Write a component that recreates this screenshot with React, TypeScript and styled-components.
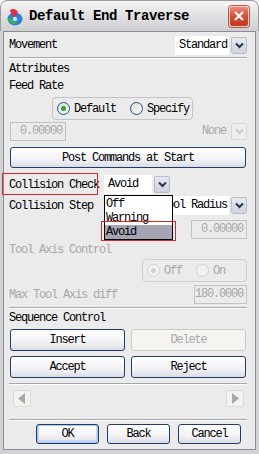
import React from "react";
import styled, { createGlobalStyle, css } from "styled-components";

const MONO = `"Liberation Mono", "Cousine", "Courier New", "Nimbus Mono PS", "FreeMono", monospace`;

const GlobalStyle = createGlobalStyle`
  html, body { margin: 0; padding: 0; background: #ffffff; }
  body { font-family: ${MONO}; }
  * { box-sizing: border-box; }
`;

const Window = styled.div`
  position: relative;
  width: 259px;
  height: 454px;
  background: #d2d2d6;
  border-radius: 7px 7px 0 0;
  display: flex;
  flex-direction: column;
  overflow: hidden;
  font-family: ${MONO};
`;

const TitleBar = styled.div`
  height: 31px;
  display: flex;
  align-items: center;
  padding: 0 9px 0 5px;
  background: linear-gradient(#f6f6f6, #e2e2e4 45%, #cfcfd3);
  border-radius: 7px 7px 0 0;
  border: 1px solid #9a9aa0;
  border-bottom: none;
`;

const TitleText = styled.span`
  flex: 1;
  margin-left: 5px;
  font-family: ${MONO};
  font-size: 14px;
  font-weight: bold;
  letter-spacing: -0.4px;
  color: #000;
`;

const CloseButton = styled.div`
  width: 20px;
  height: 21px;
  border-radius: 3px;
  border: 1px solid #f4d0c8;
  background: linear-gradient(#e88a78, #d44a32 55%, #c23a22);
  display: flex;
  align-items: center;
  justify-content: center;
  box-shadow: 0 0 0 1px #b85a4a;
`;

const Body = styled.div`
  flex: 1;
  margin: 0 3px 4px;
  border: 1px solid #8c8c90;
  background: #ebebeb;
  padding: 0 8px 0 5px;
  display: flex;
  flex-direction: column;
`;

const Row = styled.div<{ $h: number; $mt: number; $pl?: number }>`
  height: ${(p) => p.$h}px;
  margin-top: ${(p) => p.$mt}px;
  padding-left: ${(p) => p.$pl ?? 0}px;
  display: flex;
  align-items: center;
  justify-content: space-between;
  flex-shrink: 0;
`;

const textBase = css`
  font-family: ${MONO};
  font-size: 12px;
  letter-spacing: -1.2px;
  white-space: nowrap;
`;

const Label = styled.span<{ $disabled?: boolean }>`
  ${textBase};
  color: ${(p) => (p.$disabled ? "#a8a8a8" : "#000")};
`;

const Separator = styled.div<{ $mt: number }>`
  margin-top: ${(p) => p.$mt}px;
  height: 2px;
  border-top: 1px solid #a8a8ac;
  border-bottom: 1px solid #ffffff;
  flex-shrink: 0;
`;

const Combo = styled.div<{ $w: number }>`
  width: ${(p) => p.$w}px;
  height: 19px;
  display: flex;
  align-items: center;
  gap: 2px;
`;

const ComboField = styled.div<{ $disabled?: boolean }>`
  ${textBase};
  flex: 1;
  height: 19px;
  line-height: 19px;
  padding-left: 4px;
  background: ${(p) => (p.$disabled ? "#ebebeb" : "#ffffff")};
  color: ${(p) => (p.$disabled ? "#a8a8a8" : "#000")};
  overflow: hidden;
`;

const ArrowBtn = styled.div<{ $disabled?: boolean }>`
  width: 16px;
  height: 17px;
  border: 1px solid ${(p) => (p.$disabled ? "#d8d8dc" : "#b8bcc8")};
  border-radius: 2px;
  background: ${(p) =>
    p.$disabled ? "#eeeef0" : "linear-gradient(#e8e9ef, #cfd2dc)"};
  display: flex;
  align-items: center;
  justify-content: center;
`;

const Field = styled.div<{ $w: number }>`
  ${textBase};
  width: ${(p) => p.$w}px;
  height: 19px;
  line-height: 17px;
  border: 1px solid #c2c2c4;
  color: #a8a8a8;
  text-align: right;
  padding-right: 3px;
`;

const RadioGroup = styled.div<{ $w: number; $ml: number; $disabled?: boolean }>`
  width: ${(p) => p.$w}px;
  margin-left: ${(p) => p.$ml}px;
  height: 23px;
  border: 1px solid ${(p) => (p.$disabled ? "#cfcfd2" : "#c4c4c8")};
  border-radius: 4px;
  display: flex;
  align-items: center;
  padding-left: 4px;
`;

const RadioItem = styled.div<{ $w: number }>`
  width: ${(p) => p.$w}px;
  display: flex;
  align-items: center;
  gap: 4px;
`;

const RadioCircle = styled.span<{ $checked?: boolean; $disabled?: boolean }>`
  width: 13px;
  height: 13px;
  border-radius: 50%;
  border: 1px solid ${(p) => (p.$disabled ? "#d2d2d6" : "#1c5180")};
  background: ${(p) =>
    p.$disabled ? "#f2f2f2" : "linear-gradient(135deg, #dcdcd6, #ffffff)"};
  display: flex;
  align-items: center;
  justify-content: center;
  &::after {
    content: "";
    display: ${(p) => (p.$checked ? "block" : "none")};
    width: 5px;
    height: 5px;
    border-radius: 50%;
    background: ${(p) => (p.$disabled ? "#d0d0d0" : "#2fa42f")};
  }
`;

const Button = styled.div<{ $disabled?: boolean; $default?: boolean; $w?: number }>`
  ${textBase};
  ${(p) => (p.$w ? `width: ${p.$w}px;` : "flex: 1;")}
  height: 100%;
  border: 1px solid ${(p) => (p.$disabled ? "#cacac4" : "#1f3d6a")};
  border-radius: 3px;
  background: ${(p) =>
    p.$disabled
      ? "#f4f4f0"
      : "linear-gradient(#ffffff, #f2f2f6 60%, #dcdce4)"};
  color: ${(p) => (p.$disabled ? "#a8a8a4" : "#000")};
  display: flex;
  align-items: center;
  justify-content: center;
  ${(p) => p.$default && "box-shadow: inset 0 0 0 1px #a9c4ee, inset 0 -1px 0 2px #c6d6f2;"}
`;

const ButtonPair = styled.div<{ $h: number; $mt: number }>`
  height: ${(p) => p.$h}px;
  margin-top: ${(p) => p.$mt}px;
  display: flex;
  gap: 6px;
  padding: 0 1px 0 1px;
  flex-shrink: 0;
`;

const ScrollBtn = styled.div`
  width: 18px;
  height: 17px;
  border: 1px solid #dadad6;
  border-radius: 2px;
  background: #f2f2f0;
  display: flex;
  align-items: center;
  justify-content: center;
`;

const Footer = styled.div`
  height: 20px;
  margin-top: 3px;
  display: flex;
  justify-content: flex-end;
  gap: 8px;
  padding-right: 6px;
  flex-shrink: 0;
`;

const Dropdown = styled.div`
  position: absolute;
  left: 104px;
  top: 195px;
  width: 69px;
  height: 45px;
  background: #ffffff;
  border: 1px solid #000;
  display: flex;
  flex-direction: column;
  padding-top: 1px;
`;

const DropItem = styled.div<{ $selected?: boolean }>`
  ${textBase};
  height: 14px;
  line-height: 14px;
  padding-left: 1px;
  background: ${(p) => (p.$selected ? "#a4a4b4" : "transparent")};
  color: #000;
`;

const Marker = styled.div<{ $x: number; $y: number; $w: number; $h: number }>`
  position: absolute;
  left: ${(p) => p.$x}px;
  top: ${(p) => p.$y}px;
  width: ${(p) => p.$w}px;
  height: ${(p) => p.$h}px;
  border: 1px solid #d42a2a;
  pointer-events: none;
`;

const Chevron = ({ color = "#2a3450" }: { color?: string }) => (
  <svg width="9" height="7" viewBox="0 0 9 7">
    <path d="M1 1.5 L4.5 5 L8 1.5" stroke={color} strokeWidth="2" fill="none" />
  </svg>
);

const AppIcon = () => (
  <svg width="18" height="19" viewBox="0 0 18 19">
    <ellipse cx="9" cy="12" rx="7.5" ry="6.5" fill="#2f7fd6" />
    <path d="M2 12 Q4 18 12 17 Q6 15 5 10 Z" fill="#3cb83c" />
    <path d="M10 13 Q16 13 16 8 Q15 14 10 13 Z" fill="#f0c020" />
    <path d="M4 3 Q9 0 12 5 L9 10 Q5 9 4 3 Z" fill="#e02c4a" />
    <circle cx="9" cy="12" r="2.2" fill="#bfe4ff" />
  </svg>
);

const Triangle = ({ dir }: { dir: "left" | "right" }) => (
  <svg width="8" height="11" viewBox="0 0 8 11">
    <path d={dir === "left" ? "M7 0 L0 5.5 L7 11 Z" : "M1 0 L8 5.5 L1 11 Z"} fill="#a8a8a8" />
  </svg>
);

export default function App() {
  return (
    <>
      <GlobalStyle />
      <Window>
        <TitleBar>
          <AppIcon />
          <TitleText>Default End Traverse</TitleText>
          <CloseButton>
            <svg width="12" height="12" viewBox="0 0 12 12">
              <path d="M2 2 L10 10 M10 2 L2 10" stroke="#ffffff" strokeWidth="2.2" />
            </svg>
          </CloseButton>
        </TitleBar>
        <Body>
          <Row $h={20} $mt={3}>
            <Label>Movement</Label>
            <Combo $w={72}>
              <ComboField>Standard</ComboField>
              <ArrowBtn><Chevron /></ArrowBtn>
            </Combo>
          </Row>
          <Separator $mt={2} />
          <Row $h={16} $mt={2}>
            <Label>Attributes</Label>
          </Row>
          <Row $h={16} $mt={1}>
            <Label>Feed Rate</Label>
          </Row>
          <Row $h={23} $mt={3} style={{ justifyContent: "flex-start" }}>
            <RadioGroup $w={141} $ml={43}>
              <RadioItem $w={73}>
                <RadioCircle $checked />
                <Label>Default</Label>
              </RadioItem>
              <RadioItem $w={62}>
                <RadioCircle />
                <Label>Specify</Label>
              </RadioItem>
            </RadioGroup>
          </Row>
          <Row $h={19} $mt={2} $pl={1}>
            <Field $w={56}>0.00000</Field>
            <Combo $w={49}>
              <ComboField $disabled>None</ComboField>
              <ArrowBtn $disabled><Chevron color="#c8c8cc" /></ArrowBtn>
            </Combo>
          </Row>
          <ButtonPair $h={21} $mt={6}>
            <Button>Post Commands at Start</Button>
          </ButtonPair>
          <Row $h={19} $mt={7}>
            <Label>Collision Check</Label>
            <Combo $w={66} style={{ marginRight: 77 }}>
              <ComboField>Avoid</ComboField>
              <ArrowBtn><Chevron /></ArrowBtn>
            </Combo>
          </Row>
          <Row $h={19} $mt={2}>
            <Label>Collision Step</Label>
            <Combo $w={90}>
              <ComboField>Tool Radius</ComboField>
              <ArrowBtn><Chevron /></ArrowBtn>
            </Combo>
          </Row>
          <Row $h={19} $mt={5} style={{ justifyContent: "flex-end" }}>
            <Field $w={56}>0.00000</Field>
          </Row>
          <Row $h={16} $mt={3}>
            <Label $disabled>Tool Axis Control</Label>
          </Row>
          <Row $h={23} $mt={1} style={{ justifyContent: "flex-end" }}>
            <RadioGroup $w={105} $ml={0} $disabled>
              <RadioItem $w={49}>
                <RadioCircle $checked $disabled />
                <Label $disabled>Off</Label>
              </RadioItem>
              <RadioItem $w={40}>
                <RadioCircle $disabled />
                <Label $disabled>On</Label>
              </RadioItem>
            </RadioGroup>
          </Row>
          <Row $h={19} $mt={3}>
            <Label $disabled>Max Tool Axis diff</Label>
            <Field $w={53}>180.0000</Field>
          </Row>
          <Separator $mt={3} />
          <Row $h={16} $mt={1}>
            <Label>Sequence Control</Label>
          </Row>
          <ButtonPair $h={22} $mt={3}>
            <Button>Insert</Button>
            <Button $disabled>Delete</Button>
          </ButtonPair>
          <ButtonPair $h={22} $mt={5}>
            <Button>Accept</Button>
            <Button>Reject</Button>
          </ButtonPair>
          <Separator $mt={5} />
          <Row $h={17} $mt={5} $pl={4}>
            <ScrollBtn><Triangle dir="left" /></ScrollBtn>
            <ScrollBtn style={{ marginRight: 3 }}><Triangle dir="right" /></ScrollBtn>
          </Row>
          <Separator $mt={12} />
          <Footer>
            <Button $w={63} $default>OK</Button>
            <Button $w={63}>Back</Button>
            <Button $w={63}>Cancel</Button>
          </Footer>
        </Body>
        <Dropdown>
          <DropItem>Off</DropItem>
          <DropItem>Warning</DropItem>
          <DropItem $selected>Avoid</DropItem>
        </Dropdown>
        <Marker $x={2} $y={173} $w={96} $h={22} />
        <Marker $x={101} $y={221} $w={75} $h={20} />
      </Window>
    </>
  );
}
